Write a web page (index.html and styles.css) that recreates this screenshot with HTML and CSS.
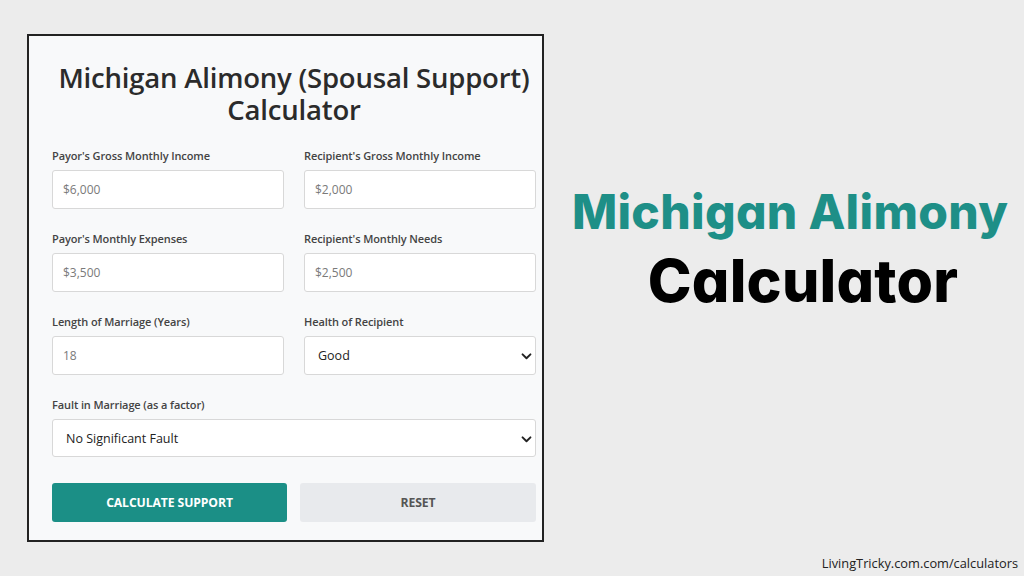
FILE: index.html
```html
<!DOCTYPE html>
<html lang="en">
<head>
<meta charset="utf-8">
<title>Michigan Alimony Calculator</title>
<link rel="stylesheet" href="styles.css">
</head>
<body>
<div class="page">
  <div class="card">
    <h1 class="card-title">Michigan Alimony (Spousal Support) Calculator</h1>
    <div class="grid">
      <div class="field">
        <label class="label">Payor's Gross Monthly Income</label>
        <div class="input placeholder">$6,000</div>
      </div>
      <div class="field">
        <label class="label">Recipient's Gross Monthly Income</label>
        <div class="input placeholder">$2,000</div>
      </div>
      <div class="field">
        <label class="label">Payor's Monthly Expenses</label>
        <div class="input placeholder">$3,500</div>
      </div>
      <div class="field">
        <label class="label">Recipient's Monthly Needs</label>
        <div class="input placeholder">$2,500</div>
      </div>
      <div class="field">
        <label class="label">Length of Marriage (Years)</label>
        <div class="input placeholder">18</div>
      </div>
      <div class="field">
        <label class="label">Health of Recipient</label>
        <div class="input select">Good
          <svg class="chev" viewBox="0 0 12 8" width="11" height="7"><path d="M1.5 1.5 L6 6 L10.5 1.5" fill="none" stroke="#222" stroke-width="2.2" stroke-linecap="round" stroke-linejoin="round"/></svg>
        </div>
      </div>
      <div class="field wide">
        <label class="label">Fault in Marriage (as a factor)</label>
        <div class="input select">No Significant Fault
          <svg class="chev" viewBox="0 0 12 8" width="11" height="7"><path d="M1.5 1.5 L6 6 L10.5 1.5" fill="none" stroke="#222" stroke-width="2.2" stroke-linecap="round" stroke-linejoin="round"/></svg>
        </div>
      </div>
    </div>
    <div class="buttons">
      <button class="btn primary">CALCULATE SUPPORT</button>
      <button class="btn secondary">RESET</button>
    </div>
  </div>
  <div class="side">
    <div class="headline">
      <div class="hl-1">Michigan Alimony</div>
      <div class="hl-2">Calculator</div>
    </div>
    <div class="footer">LivingTricky.com.com/calculators</div>
  </div>
</div>
</body>
</html>
```
FILE: styles.css
```css
* { box-sizing: border-box; }
html, body { margin: 0; padding: 0; }
body {
  background: #ececec;
  font-family: "Open Sans", "Noto Sans", sans-serif;
  color: #222;
}
.page {
  width: 1024px;
  height: 576px;
  display: flex;
  align-items: flex-start;
  padding-left: 27px;
}
.card {
  margin-top: 34px;
  width: 517px;
  height: 508px;
  border: 2px solid #222;
  background: #f8f9fa;
  padding: 26px 6px 0 23px;
}
.card-title {
  margin: 0;
  font-size: 27.5px;
  line-height: 32px;
  font-weight: 600;
  text-align: center;
  color: #2b2b2b;
  letter-spacing: -0.2px;
}
.grid {
  margin-top: 23px;
  display: grid;
  grid-template-columns: 232px 232px;
  column-gap: 20px;
  row-gap: 23px;
}
.field { display: flex; flex-direction: column; }
.field.wide { grid-column: 1 / 3; }
.label {
  font-size: 11px;
  line-height: 14px;
  font-weight: 600;
  color: #444;
  margin-bottom: 7px;
  letter-spacing: -0.1px;
}
.input {
  height: 39px;
  background: #fff;
  border: 1px solid #d8d8d8;
  border-radius: 3px;
  padding: 0 10px;
  display: flex;
  align-items: center;
  font-size: 12px;
  color: #333;
  position: relative;
}
.input.placeholder { color: #7a7a7a; }
.input.select { padding-left: 13px; font-size: 12.5px; color: #222; }
.field.wide .input { height: 38px; padding-left: 13px; }
.chev { position: absolute; right: 3px; top: 16px; }
.buttons {
  margin-top: 26px;
  display: flex;
  gap: 13px;
}
.btn {
  height: 39px;
  border: none;
  border-radius: 3px;
  font-family: "Open Sans", "Noto Sans", sans-serif;
  font-size: 12.2px;
  font-weight: 700;
  letter-spacing: -0.1px;
}
.btn.primary { width: 235px; background: #1b8f86; color: #fff; }
.btn.secondary { width: 236px; background: #e8eaed; color: #555; }
.side {
  flex: 1;
  height: 576px;
  display: flex;
  flex-direction: column;
  justify-content: space-between;
}
.headline {
  margin-top: 186px;
  display: flex;
  flex-direction: column;
  align-items: center;
  padding-left: 12px;
  font-family: "Inter", "Lato", sans-serif;
  font-weight: 800;
  font-feature-settings: "cv11" 1;
}
.hl-1 {
  font-size: 48px;
  line-height: 52px;
  color: #1e8f87;
  letter-spacing: 0.3px;
}
.hl-2 {
  margin-top: 12px;
  padding-left: 26px;
  font-size: 59px;
  line-height: 62px;
  color: #000;
  letter-spacing: 0.2px;
}
.footer {
  align-self: flex-end;
  margin-right: 6px;
  margin-bottom: 5px;
  font-size: 12.8px;
  line-height: 16px;
  color: #222;
}
```
